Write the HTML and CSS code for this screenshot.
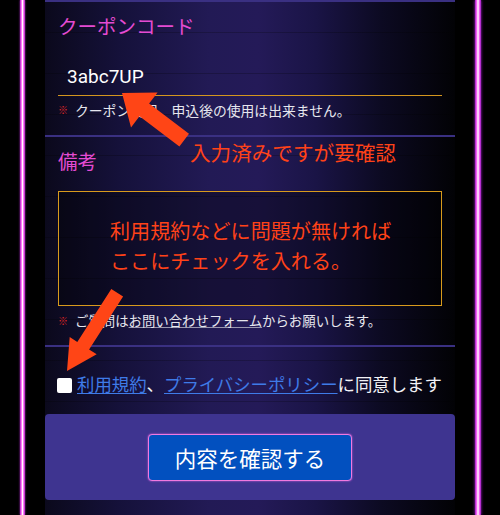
FILE: index.html
```html
<!DOCTYPE html>
<html lang="ja">
<head>
<meta charset="utf-8">
<title>Form</title>
<link rel="stylesheet" href="styles.css">
</head>
<body>
<div class="screen">
  <div class="rail rail-l"></div>
  <main class="panel">
    <section class="field field-coupon">
      <h2 class="label">クーポンコード</h2>
      <div class="input">3abc7UP</div>
      <p class="note note-wide"><span class="mark">※</span>クーポン使用、申込後の使用は出来ません。</p>
    </section>
    <section class="field field-remarks">
      <h2 class="label">備考</h2>
      <div class="textarea"></div>
      <p class="note"><span class="mark">※</span>ご質問は<a class="note-link">お問い合わせフォーム</a>からお願いします。</p>
    </section>
    <div class="agree">
      <span class="checkbox"></span><a class="link">利用規約</a>、<a class="link">プライバシーポリシー</a>に同意します
    </div>
    <div class="submit-box">
      <button class="submit">内容を確認する</button>
    </div>
  </main>
  <div class="rail rail-r"></div>
</div>

<div class="annotations">
  <svg class="arrows" width="500" height="515" viewBox="0 0 500 515">
    <polygon points="122,93 157.6,92.4 149.1,103.5 189,133.7 179.4,146.5 139.5,116.3 131,127.4"/>
    <polygon points="67,371 69.7,337.1 77.3,341.9 111.3,288.9 123.1,296.5 89.1,349.5 96.7,354.3"/>
  </svg>
  <p class="anno anno-1">入力済みですが要確認</p>
  <p class="anno anno-2">利用規約などに問題が無ければ<br>ここにチェックを入れる。</p>
</div>
</body>
</html>
```

FILE: styles.css
```css
* { box-sizing: border-box; }

html, body {
  margin: 0;
  padding: 0;
  background: #000;
  width: 500px;
  height: 515px;
  overflow: hidden;
}

body {
  position: relative;
  font-family: Roboto, "Noto Sans CJK JP", sans-serif;
  color: #fff;
}

.screen {
  display: flex;
  height: 515px;
  padding-left: 20px;
}

.rail {
  flex: none;
  height: 100%;
}

.rail-l {
  width: 5px;
  margin-right: 20px;
  background: linear-gradient(to right, #a81cc0 0%, #ff7cf6 30%, #ffffff 50%, #ff7cf6 70%, #a81cc0 100%);
  box-shadow: 0 0 2px #c030e0;
}

.rail-r {
  width: 6px;
  margin-left: 20px;
  background: linear-gradient(to right, #9a18c0 0%, #f060f0 25%, #ffffff 50%, #f060f0 75%, #9a18c0 100%);
  box-shadow: 0 0 3px #b020e0;
}

.panel {
  flex: none;
  width: 410px;
  height: 100%;
  background:
    repeating-linear-gradient(to bottom, transparent 0 32px, rgba(0,0,0,0.22) 32px 33px, transparent 33px 41px),
    linear-gradient(to right, #0b091c 0%, #15113a 18%, #221a55 40%, #241a58 52%, #1a1446 66%, #0c0a22 82%, #020205 100%);
}

.field {
  border-top: 2px solid #3a3082;
  padding: 0 13px;
}

.label {
  margin: 14px 0 0;
  height: 24px;
  font-size: 19.5px;
  line-height: 24px;
  font-weight: 400;
  color: #e44bd2;
}

.input {
  margin-top: 18px;
  height: 38px;
  padding-left: 9px;
  font-size: 19px;
  line-height: 37px;
  color: #fff;
  border-bottom: 1px solid #d4961e;
}

.note {
  margin: 5px 0 0;
  height: 20px;
  display: flex;
  align-items: center;
  font-size: 13.4px;
  line-height: 20px;
  color: #e6e6ee;
  white-space: nowrap;
}

.note-wide { font-size: 13.8px; }

.mark {
  flex: none;
  width: 17px;
  color: #e02626;
  font-size: 10px;
}

.note-link {
  color: #e6e6ee;
  text-decoration: underline;
  text-decoration-color: #9a98b0;
}

.field-coupon { padding-bottom: 14px; }

.field-remarks { padding-bottom: 13px; }

.textarea {
  margin-top: 16px;
  height: 115px;
  border: 1px solid #d89a1c;
  background: rgba(0, 0, 0, 0.35);
}

.field-remarks .note { margin-top: 6px; }

.agree {
  border-top: 2px solid #3a3082;
  padding: 26px 0 0 12px;
  height: 52px;
  display: flex;
  align-items: center;
  font-size: 17.4px;
  line-height: 24px;
  color: #f2f2f6;
  white-space: nowrap;
}

.checkbox {
  flex: none;
  width: 15px;
  height: 15px;
  margin-right: 5px;
  background: #fff;
  border-radius: 2px;
}

.link {
  color: #3f7be8;
  text-decoration: underline;
  text-underline-offset: 2px;
}

.submit-box {
  margin-top: 17px;
  height: 86px;
  padding-top: 20px;
  background: #3e3490;
  border-radius: 4px;
  display: flex;
  justify-content: center;
  align-items: flex-start;
}

.submit {
  width: 204px;
  height: 47px;
  background: #0250bf;
  border: 1px solid #f07ae0;
  border-radius: 4px;
  box-shadow: 0 0 2px #e060e0;
  color: #fff;
  font-family: Roboto, "Noto Sans CJK JP", sans-serif;
  font-size: 21.5px;
  padding: 0;
}

.annotations {
  position: absolute;
  left: 0;
  top: 0;
  width: 500px;
  height: 515px;
  pointer-events: none;
}

.arrows {
  position: absolute;
  left: 0;
  top: 0;
}

.arrows polygon { fill: #ff4516; }

.anno {
  position: absolute;
  margin: 0;
  color: #ff4218;
  white-space: nowrap;
}

.anno-1 {
  left: 190px;
  top: 142px;
  font-size: 20.6px;
  line-height: 24px;
}

.anno-2 {
  left: 110px;
  top: 217px;
  font-size: 20.1px;
  line-height: 30px;
}
```
